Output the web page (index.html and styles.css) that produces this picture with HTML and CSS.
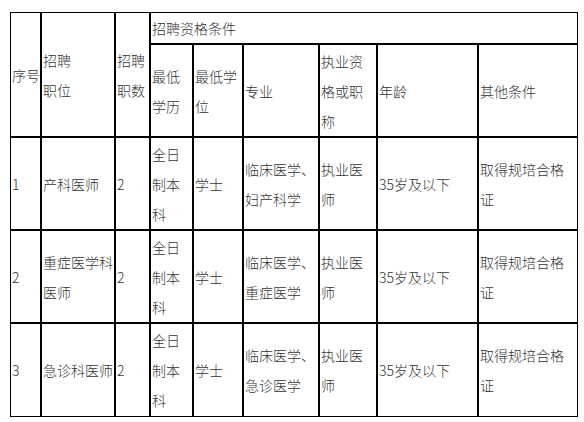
FILE: index.html
```html
<!DOCTYPE html>
<html lang="zh">
<head>
<meta charset="utf-8">
<link rel="stylesheet" href="styles.css">
</head>
<body>
<table class="tbl">
  <colgroup>
    <col class="c1"><col class="c2"><col class="c3"><col class="c4"><col class="c5">
    <col class="c6"><col class="c7"><col class="c8"><col class="c9">
  </colgroup>
  <tr class="h1">
    <td rowspan="2">序号</td>
    <td rowspan="2">招聘<br>职位</td>
    <td rowspan="2">招聘<br>职数</td>
    <td colspan="6">招聘资格条件</td>
  </tr>
  <tr class="row">
    <td>最低<br>学历</td>
    <td>最低学<br>位</td>
    <td>专业</td>
    <td>执业资<br>格或职<br>称</td>
    <td>年龄</td>
    <td>其他条件</td>
  </tr>
  <tr class="row">
    <td>1</td>
    <td>产科医师</td>
    <td>2</td>
    <td>全日<br>制本<br>科</td>
    <td>学士</td>
    <td>临床医学、<br>妇产科学</td>
    <td>执业医<br>师</td>
    <td>35岁及以下</td>
    <td>取得规培合格<br>证</td>
  </tr>
  <tr class="row">
    <td>2</td>
    <td>重症医学科<br>医师</td>
    <td>2</td>
    <td>全日<br>制本<br>科</td>
    <td>学士</td>
    <td>临床医学、<br>重症医学</td>
    <td>执业医<br>师</td>
    <td>35岁及以下</td>
    <td>取得规培合格<br>证</td>
  </tr>
  <tr class="row last">
    <td>3</td>
    <td>急诊科医师</td>
    <td>2</td>
    <td>全日<br>制本<br>科</td>
    <td>学士</td>
    <td>临床医学、<br>急诊医学</td>
    <td>执业医<br>师</td>
    <td>35岁及以下</td>
    <td>取得规培合格<br>证</td>
  </tr>
</table>
</body>
</html>
```

FILE: styles.css
```css
html, body {
  margin: 0;
  padding: 0;
  background: #fff;
}
body {
  font-family: "Microsoft YaHei", "Noto Sans CJK SC", "Noto Sans", sans-serif;
  font-size: 14px;
  font-weight: 300;
  color: #333;
}
.tbl {
  margin: 12px 0 0 10px;
  width: 568px;
  table-layout: fixed;
  border-collapse: separate;
  border-spacing: 0;
}
.tbl td {
  border: 1px solid #000;
  padding: 0 1px;
  line-height: 30px;
  vertical-align: middle;
  text-align: left;
  white-space: nowrap;
  overflow: hidden;
}
.c1 { width: 31px; }
.c2 { width: 74px; }
.c3 { width: 35px; }
.c4 { width: 43px; }
.c5 { width: 50px; }
.c6 { width: 76px; }
.c7 { width: 58px; }
.c8 { width: 101px; }
.c9 { width: 100px; }
.h1 { height: 32px; }
.row { height: 93px; }
.last { height: 94px; }
```
